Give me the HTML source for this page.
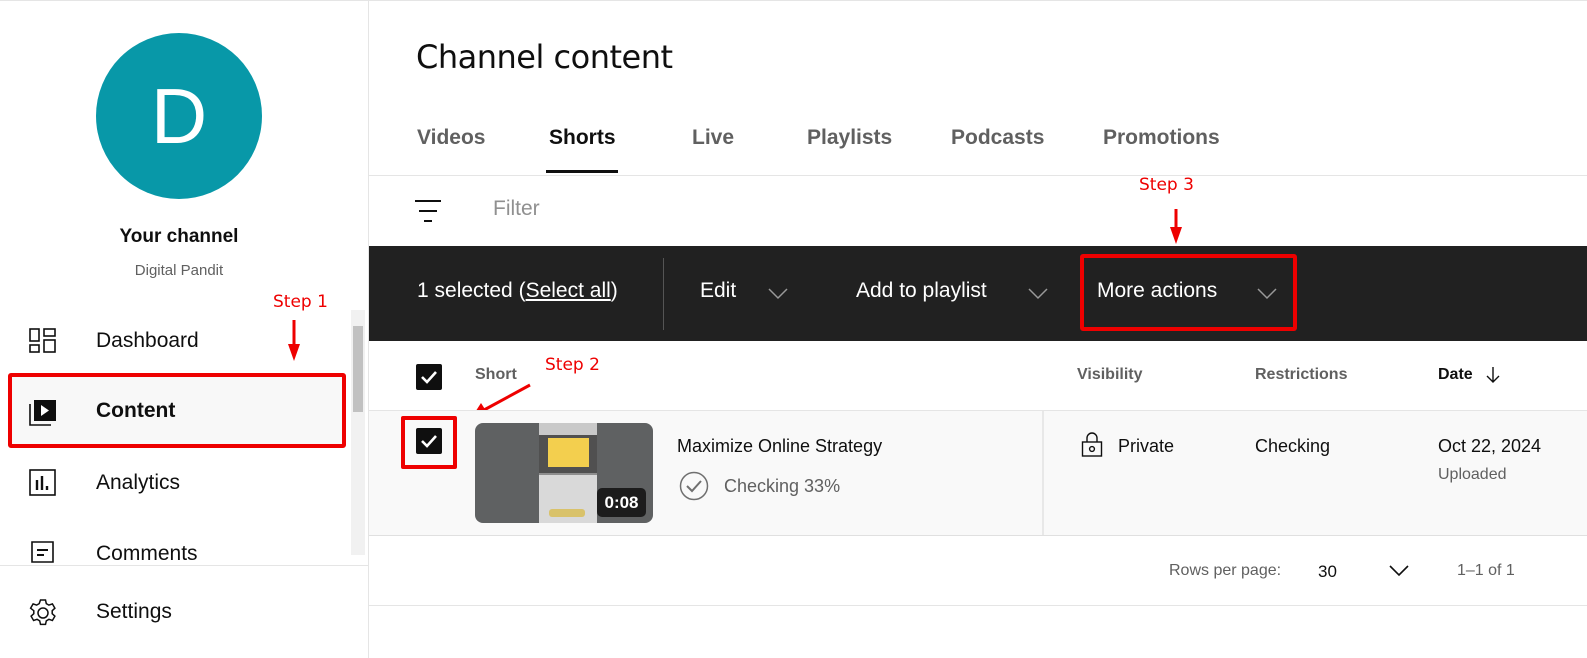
<!DOCTYPE html>
<html><head><meta charset="utf-8"><style>
*{margin:0;padding:0;box-sizing:border-box}
body{width:1587px;height:658px;overflow:hidden;background:#fff;font-family:"Liberation Sans",Roboto,sans-serif;color:#0f0f0f;position:relative}
.a{position:absolute;white-space:nowrap}
.red{color:#e00;font-family:"DejaVu Sans",sans-serif;font-size:17px}
</style></head><body>
<div class="a" style="left:0;top:0;width:1587px;height:1px;background:#e5e5e5"></div>
<div class="a" style="left:368px;top:0;width:1px;height:658px;background:#e5e5e5"></div>
<!-- sidebar -->
<div class="a" style="left:96px;top:33px;width:166px;height:166px;border-radius:50%;background:#0898a8;color:#fff;font-size:78px;text-align:center;line-height:166px">D</div>
<div class="a" style="left:0;width:358px;top:226px;text-align:center;font-size:19px;font-weight:bold;color:#0f0f0f">Your channel</div>
<div class="a" style="left:0;width:358px;top:262px;text-align:center;font-size:15px;color:#606060">Digital Pandit</div>
<div class="a red" style="left:273px;top:292px">Step 1</div>
<svg class="a" style="left:286px;top:320px" width="16" height="42"><line x1="8" y1="0" x2="8" y2="26" stroke="#e00" stroke-width="3"/><polygon points="2,24 14,24 8,41" fill="#e00"/></svg>
<div class="a" style="left:351px;top:310px;width:14px;height:245px;background:#f1f1f1"></div>
<div class="a" style="left:353px;top:326px;width:10px;height:86px;background:#c1c1c1"></div>
<svg class="a" style="left:28px;top:327px" width="30" height="30" fill="none" stroke="#0f0f0f" stroke-width="1.6"><rect x="2" y="2" width="9" height="12"/><rect x="16" y="2" width="11" height="7"/><rect x="2" y="18" width="9" height="7"/><rect x="16" y="13" width="11" height="12"/></svg>
<div class="a" style="left:96px;top:329px;font-size:21px">Dashboard</div>
<div class="a" style="left:8px;top:373px;width:338px;height:75px;background:#f8f8f8;border:4px solid #e00;border-radius:3px"></div>
<svg class="a" style="left:28px;top:398px" width="30" height="30"><path d="M2 6 V27 H23" fill="none" stroke="#0f0f0f" stroke-width="1.6"/><rect x="6" y="2" width="22" height="21" fill="#0f0f0f"/><polygon points="13,7 21,12.5 13,18" fill="#fff"/></svg>
<div class="a" style="left:96px;top:399px;font-size:21px;font-weight:bold">Content</div>
<svg class="a" style="left:28px;top:468px" width="30" height="30" fill="none" stroke="#0f0f0f" stroke-width="1.6"><rect x="2" y="2" width="25" height="25"/><path d="M9 12v10M14 8v14M19 18v4" stroke-width="2.4"/></svg>
<div class="a" style="left:96px;top:471px;font-size:21px">Analytics</div>
<svg class="a" style="left:28px;top:540px" width="30" height="26" fill="none" stroke="#0f0f0f" stroke-width="1.6"><path d="M4 2H25V22H4Z"/><path d="M9 10H20M9 15H16" stroke-width="2"/></svg>
<div class="a" style="left:96px;top:542px;font-size:21px">Comments</div>
<div class="a" style="left:0;top:565px;width:368px;height:93px;background:#fff;border-top:1px solid #e5e5e5"></div>
<svg class="a" style="left:27px;top:597px" width="32" height="32" fill="none" stroke="#0f0f0f" stroke-width="1.5"><circle cx="16" cy="16" r="5"/><path d="M13.5 3h5l.8 3.6 2.6 1.5 3.5-1.2 2.5 4.3-2.7 2.5v3l2.7 2.5-2.5 4.3-3.5-1.2-2.6 1.5-.8 3.6h-5l-.8-3.6-2.6-1.5-3.5 1.2-2.5-4.3 2.7-2.5v-3L3.6 11.2l2.5-4.3 3.5 1.2 2.6-1.5z"/></svg>
<div class="a" style="left:96px;top:600px;font-size:21px">Settings</div>
<!-- main -->
<div class="a" style="left:416px;top:38px;font-size:32px;font-family:'DejaVu Sans',sans-serif;letter-spacing:-0.5px">Channel content</div>
<div class="a" style="left:417px;top:126px;font-size:21px;color:#606060;font-weight:bold">Videos</div>
<div class="a" style="left:549px;top:126px;font-size:21px;font-weight:bold">Shorts</div>
<div class="a" style="left:546px;top:170px;width:72px;height:3px;background:#0f0f0f"></div>
<div class="a" style="left:692px;top:126px;font-size:21px;color:#606060;font-weight:bold">Live</div>
<div class="a" style="left:807px;top:126px;font-size:21px;color:#606060;font-weight:bold">Playlists</div>
<div class="a" style="left:951px;top:126px;font-size:21px;color:#606060;font-weight:bold">Podcasts</div>
<div class="a" style="left:1103px;top:126px;font-size:21px;color:#606060;font-weight:bold">Promotions</div>
<div class="a" style="left:369px;top:175px;width:1218px;height:1px;background:#e5e5e5"></div>
<svg class="a" style="left:414px;top:199px" width="28" height="24" stroke="#0f0f0f" stroke-width="2"><path d="M1 2H27M5 12H23M10 22H18"/></svg>
<div class="a" style="left:493px;top:197px;font-size:21px;color:#909090">Filter</div>
<div class="a red" style="left:1139px;top:175px">Step 3</div>
<svg class="a" style="left:1168px;top:209px" width="16" height="36"><line x1="8" y1="0" x2="8" y2="20" stroke="#e00" stroke-width="3"/><polygon points="2,18 14,18 8,35" fill="#e00"/></svg>
<div class="a" style="left:369px;top:246px;width:1218px;height:95px;background:#212121"></div>
<div class="a" style="left:417px;top:279px;font-size:21px;color:#fff">1 selected (<u>Select all</u>)</div>
<div class="a" style="left:663px;top:258px;width:1px;height:72px;background:#555"></div>
<div class="a" style="left:700px;top:279px;font-size:21px;color:#fff">Edit</div>
<div class="a" style="left:856px;top:279px;font-size:21px;color:#fff">Add to playlist</div>
<div class="a" style="left:1097px;top:279px;font-size:21px;color:#fff">More actions</div>
<svg class="a" style="left:766px;top:286px" width="24" height="14" fill="none" stroke="#999" stroke-width="1.5"><path d="M3 3l9 9 9-9"/></svg>
<svg class="a" style="left:1026px;top:286px" width="24" height="14" fill="none" stroke="#999" stroke-width="1.5"><path d="M3 3l9 9 9-9"/></svg>
<svg class="a" style="left:1255px;top:286px" width="24" height="14" fill="none" stroke="#999" stroke-width="1.5"><path d="M3 3l9 9 9-9"/></svg>
<div class="a" style="left:1080px;top:254px;width:217px;height:77px;border:4px solid #e00;border-radius:3px"></div>
<!-- header row -->
<div class="a" style="left:416px;top:364px;width:26px;height:26px;background:#0f0f0f;border-radius:2px"></div>
<svg class="a" style="left:416px;top:364px" width="26" height="26" fill="none" stroke="#fff" stroke-width="2.6"><path d="M6 13l5 5 9-10"/></svg>
<div class="a" style="left:475px;top:366px;font-size:16px;color:#606060;font-weight:bold">Short</div>
<div class="a red" style="left:545px;top:355px">Step 2</div>
<svg class="a" style="left:470px;top:383px" width="62" height="36"><line x1="60" y1="2" x2="14" y2="27" stroke="#e00" stroke-width="3"/><polygon points="2,34 11,20 18,31" fill="#e00"/></svg>
<div class="a" style="left:1077px;top:366px;font-size:16px;color:#606060;font-weight:bold">Visibility</div>
<div class="a" style="left:1255px;top:366px;font-size:16px;color:#606060;font-weight:bold">Restrictions</div>
<div class="a" style="left:1438px;top:366px;font-size:16px;font-weight:bold">Date</div>
<svg class="a" style="left:1484px;top:365px" width="18" height="20" fill="none" stroke="#0f0f0f" stroke-width="1.4"><path d="M9 2v15M3 11l6 6 6-6"/></svg>
<div class="a" style="left:369px;top:410px;width:1218px;height:1px;background:#e5e5e5"></div>
<!-- data row -->
<div class="a" style="left:369px;top:411px;width:1218px;height:124px;background:#f9f9f9"></div>
<div class="a" style="left:1042px;top:411px;width:2px;height:124px;background:#e8e8e8"></div>
<div class="a" style="left:369px;top:535px;width:1218px;height:1px;background:#e0e0e0"></div>
<div class="a" style="left:416px;top:428px;width:26px;height:26px;background:#0f0f0f;border-radius:2px"></div>
<svg class="a" style="left:416px;top:428px" width="26" height="26" fill="none" stroke="#fff" stroke-width="2.6"><path d="M6 13l5 5 9-10"/></svg>
<div class="a" style="left:401px;top:416px;width:56px;height:53px;border:4px solid #e00;border-radius:2px"></div>
<div class="a" style="left:475px;top:423px;width:178px;height:100px;background:#5f6162;border-radius:8px;overflow:hidden">
 <div class="a" style="left:64px;top:0;width:58px;height:100px;background:#8e8e8e"></div>
 <div class="a" style="left:64px;top:0;width:58px;height:50px;background:#505050"></div>
 <div class="a" style="left:64px;top:0;width:58px;height:12px;background:#c9c9c9"></div>
 <div class="a" style="left:73px;top:15px;width:41px;height:29px;background:#f3cf4e"></div>
 <div class="a" style="left:64px;top:52px;width:58px;height:48px;background:#d9d9d9"></div>
 <div class="a" style="left:74px;top:86px;width:36px;height:8px;background:#d9c26a;border-radius:3px"></div>
 <div class="a" style="left:122px;top:65px;width:49px;height:29px;background:#1c1c1c;border-radius:5px;color:#fff;font-size:17px;font-weight:bold;text-align:center;line-height:29px">0:08</div>
</div>
<div class="a" style="left:677px;top:436px;font-size:18px">Maximize Online Strategy</div>
<svg class="a" style="left:679px;top:471px" width="30" height="30" fill="none" stroke="#707070" stroke-width="1.5"><circle cx="15" cy="15" r="13.5"/><path d="M8 15l5 5 9-10" stroke-width="2"/></svg>
<div class="a" style="left:724px;top:476px;font-size:18px;color:#606060">Checking 33%</div>
<svg class="a" style="left:1081px;top:432px" width="22" height="26" fill="none" stroke="#0f0f0f" stroke-width="1.4"><path d="M6 10V6a5 5 0 0 1 10 0v4"/><rect x="1.5" y="10" width="19" height="14"/><circle cx="11" cy="17" r="2.4"/></svg>
<div class="a" style="left:1118px;top:436px;font-size:18px">Private</div>
<div class="a" style="left:1255px;top:436px;font-size:18px">Checking</div>
<div class="a" style="left:1438px;top:436px;font-size:18px">Oct 22, 2024</div>
<div class="a" style="left:1438px;top:466px;font-size:16px;color:#606060">Uploaded</div>
<!-- pagination -->
<div class="a" style="left:1169px;top:562px;font-size:16px;color:#606060">Rows per page:</div>
<div class="a" style="left:1318px;top:562px;font-size:17px">30</div>
<svg class="a" style="left:1387px;top:562px" width="24" height="16" fill="none" stroke="#0f0f0f" stroke-width="1.6"><path d="M3 4l9 9 9-9"/></svg>
<div class="a" style="left:1457px;top:562px;font-size:16px;color:#606060">1–1 of 1</div>
<div class="a" style="left:369px;top:605px;width:1218px;height:1px;background:#e5e5e5"></div>
</body></html>
